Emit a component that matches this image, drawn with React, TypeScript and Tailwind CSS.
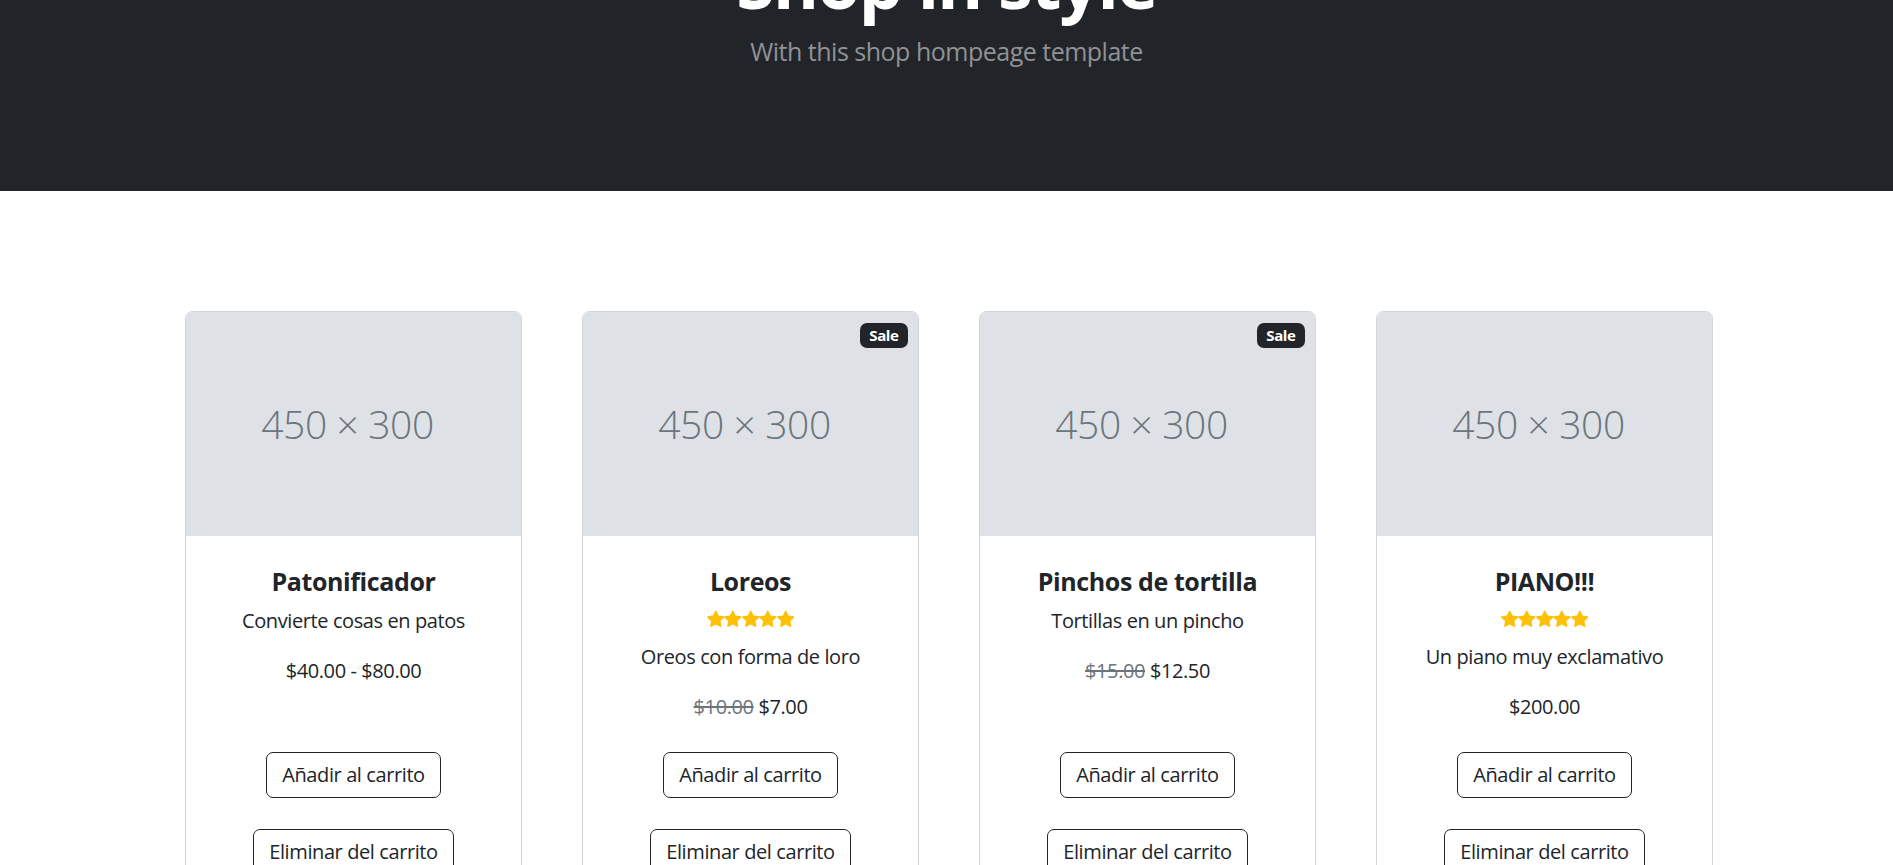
import React from "react";

type Product = {
    name: string;
    desc: string;
    price: string;
    oldPrice?: string;
    sale?: boolean;
    stars?: boolean;
};

const products: Product[] = [
    { name: "Patonificador", desc: "Convierte cosas en patos", price: "$40.00 - $80.00" },
    { name: "Loreos", desc: "Oreos con forma de loro", price: "$7.00", oldPrice: "$10.00", sale: true, stars: true },
    { name: "Pinchos de tortilla", desc: "Tortillas en un pincho", price: "$12.50", oldPrice: "$15.00", sale: true },
    { name: "PIANO!!!", desc: "Un piano muy exclamativo", price: "$200.00", stars: true },
];

const Star: React.FC = () => (
    <svg width="17.5" height="17.5" viewBox="0 0 16 16" fill="#ffc107">
        <path d="M3.612 15.443c-.386.198-.824-.149-.746-.592l.83-4.73L.173 6.765c-.329-.314-.158-.888.283-.95l4.898-.696L7.538.792c.197-.39.73-.39.927 0l2.184 4.327 4.898.696c.441.062.612.636.282.95l-3.522 3.356.83 4.73c.078.443-.36.79-.746.592L8 13.187l-4.389 2.256z" />
    </svg>
);

const ProductCard: React.FC<{ p: Product }> = ({ p }) => {
    return (
        <div className="relative flex flex-col rounded-[7.5px] border border-[#d3d4d5] bg-white">
            {p.sale && (
                <div className="absolute top-[11px] right-[10px] rounded-[7px] bg-[#212529] px-[9.5px] py-[5px] text-[15px] leading-[15px] font-bold text-white">
                    Sale
                </div>
            )}
            <div className="flex h-[224px] items-center justify-center rounded-t-[6.5px] bg-[#dee2e6] pr-[12px]">
                <span className="text-[39px] leading-none font-light text-[#6c757d]">450 × 300</span>
            </div>
            <div className="flex-1 p-[30px] text-center">
                <h5 className="mb-[10px] text-[25px] leading-[30px] font-bold tracking-[-0.4px]">{p.name}</h5>
                {p.stars && (
                    <div className="mb-[10px] flex h-[26px] items-center justify-center">
                        <Star />
                        <Star />
                        <Star />
                        <Star />
                        <Star />
                    </div>
                )}
                <p className="mb-[20px]">{p.desc}</p>
                <div>
                    {p.oldPrice && <span className="text-[#6c757d] line-through">{p.oldPrice}</span>}
                    {p.oldPrice && " "}
                    {p.price}
                </div>
            </div>
            <div className="flex flex-col items-center gap-[31px] px-[30px] pb-[30px]">
                <button className="h-[46px] rounded-[7px] border border-[#212529] px-[15px] text-[20px] text-[#212529]">
                    Añadir al carrito
                </button>
                <button className="h-[46px] rounded-[7px] border border-[#212529] px-[15px] text-[20px] text-[#212529]">
                    Eliminar del carrito
                </button>
            </div>
        </div>
    );
};

const App: React.FC = () => {
    return (
        <div className="min-h-screen bg-white text-[20px] leading-[30px] tracking-[-0.4px] text-[#212529]" style={{ fontFamily: '"Open Sans", "Noto Sans", sans-serif' }}>
            <header className="bg-[#212529] pb-[120px] text-center text-white">
                <h1 className="-mt-[60px] mb-[9px] text-[70px] leading-[84px] font-bold tracking-[-1.8px]">Shop in style</h1>
                <p className="text-[25px] leading-[37.5px] tracking-[-0.5px] text-[#909294]">With this shop hompeage template</p>
            </header>

            <section className="py-[120px]">
                <div className="grid grid-cols-[repeat(4,337px)] justify-center gap-x-[60px] pl-[5px]">
                    {products.map((p) => (
                        <ProductCard key={p.name} p={p} />
                    ))}
                </div>
            </section>
        </div>
    );
};

export default App;
